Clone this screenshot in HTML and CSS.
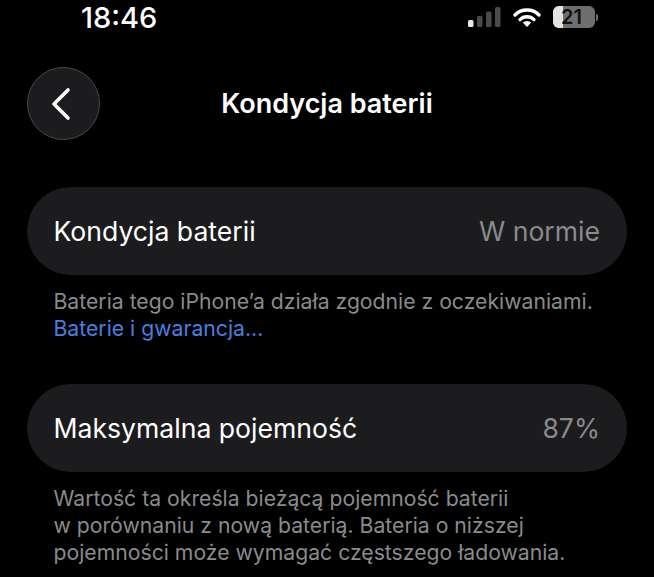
FILE: index.html
```html
<!DOCTYPE html>
<html lang="pl">
<head>
    <meta charset="UTF-8">
    <meta name="viewport" content="width=device-width, initial-scale=1.0">
    <title>Kondycja baterii</title>
    <link rel="stylesheet" href="styles.css">
</head>
<body>

    <!-- pasek stanu -->
    <div class="status-bar">
        <span class="clock">18:46</span>
        <div class="status-icons">
            <svg class="signal" width="33" height="20" viewBox="0 0 33 20">
                <rect x="0" y="13" width="5.5" height="7" rx="1.5" fill="#e8e8e8"/>
                <rect x="9" y="9" width="5.5" height="11" rx="1.5" fill="#4a4a4a"/>
                <rect x="18" y="4.5" width="5.5" height="15.5" rx="1.5" fill="#4a4a4a"/>
                <rect x="27" y="0" width="5.5" height="20" rx="1.5" fill="#4a4a4a"/>
            </svg>
            <svg class="wifi" width="28" height="20" viewBox="0 0 28 20">
                <path d="M2 8 A17 17 0 0 1 26 8" fill="none" stroke="#fff" stroke-width="3.4" stroke-linecap="round"/>
                <path d="M7 12.6 A10 10 0 0 1 21 12.6" fill="none" stroke="#fff" stroke-width="3.4" stroke-linecap="round"/>
                <path d="M9.8 15.6 L14 20 L18.2 15.6 A6 6 0 0 0 9.8 15.6 Z" fill="#fff"/>
            </svg>
            <div class="battery">
                <div class="battery-body">
                    <div class="battery-level"></div>
                    <span class="battery-text">21</span>
                </div>
                <div class="battery-cap"></div>
            </div>
        </div>
    </div>

    <!-- nagłówek -->
    <div class="nav">
        <button class="back-btn">
            <svg width="24" height="36" viewBox="0 0 24 36">
                <path d="M20 4 L6 18 L20 32" fill="none" stroke="#fff" stroke-width="3.6" stroke-linecap="round" stroke-linejoin="round"/>
            </svg>
        </button>
        <h1 class="nav-title">Kondycja baterii</h1>
    </div>

    <div class="content">
        <div class="card first">
            <span class="card-label">Kondycja baterii</span>
            <span class="card-value">W normie</span>
        </div>
        <p class="note">Bateria tego iPhone’a działa zgodnie z oczekiwaniami.<br><a class="link" href="#">Baterie i gwarancja...</a></p>

        <div class="card second">
            <span class="card-label">Maksymalna pojemność</span>
            <span class="card-value">87%</span>
        </div>
        <p class="note">Wartość ta określa bieżącą pojemność baterii<br>w porównaniu z nową baterią. Bateria o niższej<br>pojemności może wymagać częstszego ładowania.</p>
    </div>

</body>
</html>
```
FILE: styles.css
```css
html, body {
    height: 100%;
}
body {
    margin: 0;
    background-color: #000;
    color: #fff;
    font-family: 'Inter', 'Liberation Sans', sans-serif;
    overflow: hidden;
}
.status-bar {
    height: 34px;
    padding: 0 56px 0 81px;
    display: flex;
    justify-content: space-between;
    align-items: center;
}
.clock {
    font-size: 29px;
    font-weight: 500;
}
.status-icons {
    display: flex;
    align-items: center;
    gap: 12px;
}
.battery {
    display: flex;
    align-items: center;
    gap: 1px;
}
.battery-body {
    position: relative;
    width: 42px;
    height: 22px;
    border-radius: 6px;
    background-color: #6e6e6e;
    overflow: hidden;
}
.battery-level {
    width: 10px;
    height: 100%;
    background-color: #e4e4e4;
}
.battery-text {
    position: absolute;
    top: 0;
    left: 8px;
    line-height: 22px;
    color: #111;
    font-size: 20px;
    font-weight: 600;
}
.battery-cap {
    width: 2px;
    height: 7px;
    border-radius: 0 2px 2px 0;
    background-color: #6e6e6e;
}
.nav {
    margin-top: 33px;
    padding-left: 27px;
    display: flex;
    align-items: center;
    position: relative;
    height: 73px;
}
.back-btn {
    width: 73px;
    height: 73px;
    padding: 0 8px 0 0;
    border: 1px solid #4a4a4a;
    border-radius: 50%;
    background-color: #1c1c1e;
    display: flex;
    align-items: center;
    justify-content: center;
}
.nav-title {
    position: absolute;
    left: 0;
    right: 0;
    margin: 0;
    text-align: center;
    font-size: 27px;
    font-weight: 600;
}
.content {
    padding: 0 27px;
}
.card {
    height: 88px;
    padding: 0 27px 0 26.5px;
    border-radius: 44px;
    background-color: #1c1c1e;
    display: flex;
    justify-content: space-between;
    align-items: center;
    font-size: 26.6px;
}
.card.first {
    margin-top: 47px;
}
.card.second {
    margin-top: 42px;
}
.card-value {
    color: #8a8a8d;
}
.note {
    margin: 13px 0 0 26.5px;
    font-size: 21.2px;
    line-height: 27px;
    color: #8a8a8d;
    white-space: nowrap;
}
.link {
    color: #4a7fe0;
    text-decoration: none;
}
```
